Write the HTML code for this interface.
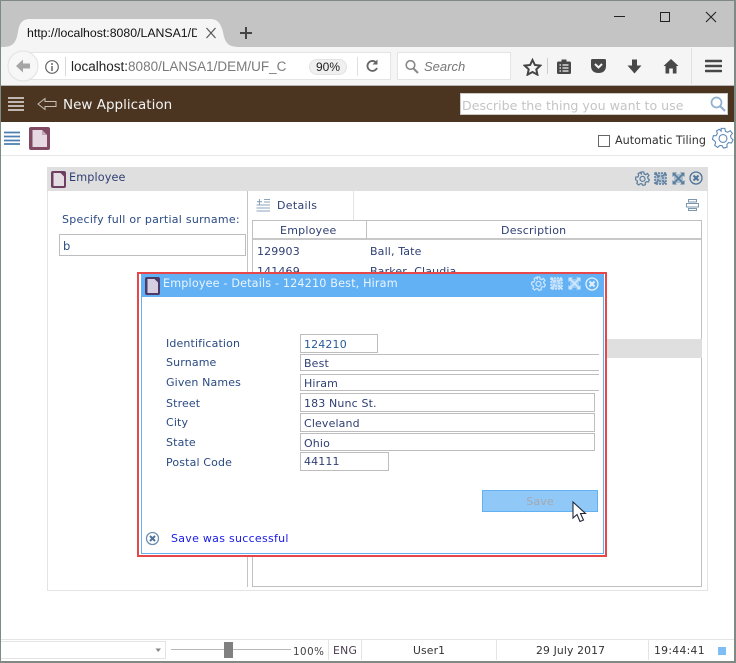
<!DOCTYPE html>
<html><head><meta charset="utf-8"><style>
html,body{margin:0;padding:0;background:#fff}
#r{position:relative;width:736px;height:663px;overflow:hidden;background:#fff;font-family:"DejaVu Sans",sans-serif;font-size:11px;color:#2f3f73}
#r div,#r svg{position:absolute}
.t{white-space:nowrap;line-height:14px;letter-spacing:.14px}
.c{letter-spacing:0}
.l{color:#2a4a82}
.f{border:1px solid #bdbdbd;box-sizing:border-box;background:#fff;color:#2f3f73;padding-left:3px;white-space:nowrap;letter-spacing:.14px}
</style></head><body><div id="r">
<div style="left:0;top:0;width:736px;height:47px;background:#c4c4c4"></div>
<svg style="left:0;top:18px" width="240" height="30"><path d="M2 29C12 29 16 26 18 14C19 6 22 1 30 1H210C218 1 221 6 223 14C225 26 229 29 240 29Z" fill="#f5f5f5"/></svg>
<div class="t c" style="left:27px;top:26px;font-family:'Liberation Sans',sans-serif;font-size:12.3px;color:#111;width:170px;overflow:hidden">http://localhost:8080/LANSA1/D</div>
<svg style="left:205px;top:26px" width="12" height="14"><path d="M1.500 2L10.500 12M10.500 2L1.500 12" stroke="#555" stroke-width="1.200"/></svg>
<svg style="left:239px;top:26px" width="14" height="14"><path d="M7 1V13M1 7H13" stroke="#444" stroke-width="2"/></svg>
<svg style="left:614px;top:10px" width="112" height="16"><path d="M0 6.500H11" stroke="#222"/><rect x="46.500" y="2.500" width="9" height="9" fill="none" stroke="#222"/><path d="M92 2L102 12M102 2L92 12" stroke="#222" stroke-width="1.100"/></svg>
<div style="left:0;top:47px;width:736px;height:39px;background:#f5f5f5"></div>
<div style="left:8px;top:52px;width:383px;height:28px;background:#fff;border:1px solid #e4e4e4;box-sizing:border-box;border-radius:14px 0 0 14px"></div>
<svg style="left:7px;top:50px" width="32" height="32"><circle cx="16" cy="16" r="15" fill="#f7f7f7" stroke="#e2e2e2"/><path d="M9 16L16 9.500V13.500H23V18.500H16V22.500Z" fill="#a5a5a5"/></svg>
<svg style="left:44px;top:59px" width="16" height="16"><circle cx="8" cy="8" r="6.300" fill="none" stroke="#666" stroke-width="1.200"/><path d="M8 7V12M8 4V6" stroke="#666" stroke-width="1.500"/></svg>
<div style="left:65px;top:57px;width:1px;height:19px;background:#d8d8d8"></div>
<div class="t c" style="left:71px;top:60px;font-family:'Liberation Sans',sans-serif;font-size:13.500px;color:#7a7a7a;width:215px;overflow:hidden"><span style="color:#222">localhost:</span>8080/LANSA1/DEM/UF_C</div>
<div class="t c" style="left:309px;top:59px;width:38px;height:16px;border-radius:8px;background:#f0f0f0;border:1px solid #e2e2e2;box-sizing:border-box;text-align:center;font-family:'Liberation Sans',sans-serif;font-size:12px;color:#222">90%</div>
<div style="left:357px;top:57px;width:1px;height:19px;background:#e0e0e0"></div>
<svg style="left:364px;top:58px" width="16" height="16"><path d="M12.500 5A5 5 0 1 0 13 10" fill="none" stroke="#666" stroke-width="1.800"/><path d="M13.500 1.500V6.500H8.500Z" fill="#666"/></svg>
<div style="left:397px;top:52px;width:114px;height:28px;background:#fff;border:1px solid #e4e4e4;box-sizing:border-box"></div>
<svg style="left:404px;top:59px" width="16" height="16"><circle cx="6.500" cy="6" r="4.300" fill="none" stroke="#888" stroke-width="1.600"/><path d="M9.500 9.500L14 14" stroke="#888" stroke-width="2"/></svg>
<div class="t c" style="left:424px;top:60px;font-family:'Liberation Sans',sans-serif;font-size:13px;font-style:italic;color:#777">Search</div>
<svg style="left:523px;top:58px" width="19" height="18"><path d="M9.500 2L11.900 7L17.300 7.600L13.300 11.300L14.400 16.600L9.500 14L4.600 16.600L5.700 11.300L1.700 7.600L7.100 7Z" fill="none" stroke="#444" stroke-width="2"/></svg>
<div style="left:547px;top:58px;width:1px;height:16px;background:#ccc"></div>
<svg style="left:556px;top:58px" width="16" height="17"><path d="M1 5Q1 3.500 2.500 3.500H5.500V1.500H10.500V3.500H13.500Q15 3.500 15 5V14.500Q15 16 13.500 16H2.500Q1 16 1 14.500Z" fill="#484848"/><path d="M3.500 7H5M6.500 7H12.500M3.500 10H5M6.500 10H12.500M3.500 13H5M6.500 13H12.500" stroke="#f5f5f5" stroke-width="1.300"/></svg>
<svg style="left:590px;top:58px" width="17" height="16"><path d="M1 2.500Q1 1 2.500 1H14.500Q16 1 16 2.500V7.500Q16 15 8.500 15Q1 15 1 7.500Z" fill="#484848"/><path d="M5 6L8.500 9.500L12 6" fill="none" stroke="#f5f5f5" stroke-width="2"/></svg>
<svg style="left:627px;top:59px" width="15" height="15"><path d="M5 0.500H10V6.500H14.500L7.500 14.500L0.500 6.500H5Z" fill="#484848"/></svg>
<svg style="left:663px;top:58px" width="16" height="16"><path d="M8 1L15.500 8H13.500V15.500H9.800V10.500H6.200V15.500H2.500V8H0.500Z" fill="#484848"/></svg>
<div style="left:691px;top:48px;width:1px;height:36px;background:#e0e0e0"></div>
<svg style="left:705px;top:59px" width="17" height="14"><path d="M1 2H16M1 7H16M1 12H16" stroke="#484848" stroke-width="2.600" stroke-linecap="round"/></svg>
<div style="left:0;top:85px;width:736px;height:1px;background:#b5b5b5"></div>
<div style="left:0;top:86px;width:736px;height:36px;background:#4b3521"></div>
<svg style="left:8px;top:97px" width="17" height="14"><path d="M0 1H16M0 5H16M0 9H16M0 13H16" stroke="#e8e4df" stroke-width="1.400"/></svg>
<svg style="left:37px;top:97px" width="20" height="14"><path d="M1 7L8 1.500V4.500H19V9.500H8V12.500Z" fill="none" stroke="#c9c0b5"/></svg>
<div class="t c" style="left:63px;top:98px;font-size:13.500px;color:#f3f3f3">New Application</div>
<div style="left:460px;top:93px;width:268px;height:22px;background:#fff;border:1px solid #c8c8c8;box-sizing:border-box"></div>
<div class="t c" style="left:462px;top:98px;font-size:12.600px;color:#c4c4c4;line-height:15px">Describe the thing you want to use</div>
<svg style="left:709px;top:95px" width="18" height="18"><circle cx="7.500" cy="7.500" r="5" fill="none" stroke="#8fb0cf" stroke-width="1.700"/><path d="M11 11L16 16" stroke="#8fb0cf" stroke-width="2"/></svg>
<svg style="left:4px;top:131px" width="17" height="14"><path d="M0 1.500H16M0 5.500H16M0 9.500H16M0 13H16" stroke="#4c7fb0" stroke-width="1.700"/></svg>
<svg style="left:29px;top:127px" width="21" height="23"><rect width="21" height="23" rx="2" fill="#7f4a62"/><path d="M3.500 3H13L18 8V20H3.500Z" fill="#e6d9e2"/><path d="M13 3V8H18" fill="#bda8b6"/></svg>
<div style="left:598px;top:135px;width:12px;height:12px;border:1px solid #666;box-sizing:border-box"></div>
<div class="t c" style="left:615px;top:134px;font-size:11.200px;color:#333">Automatic Tiling</div>
<svg style="left:712px;top:127px" width="22" height="22" viewBox="0 0 24 24"><path d="M10 1.500H14L14.700 4.800L17 5.800L19.900 4L22.300 7L20.200 9.500L20.800 12L23 14L21.300 17.500L18 17L16.300 19L16.500 22L12.500 23L10.800 20.300H8.500L6 22.300L3 20L4 17L2.800 15L0.500 13.500L1.500 9.500L4.500 9.500L5.800 7.200L5 4.300L8 2.500L10 4.500Z" fill="none" stroke="#5d8ab8" stroke-width="1.200"/><circle cx="12" cy="12.500" r="4.300" fill="none" stroke="#5d8ab8" stroke-width="1.200"/></svg>
<div style="left:0;top:155px;width:736px;height:1px;background:#e8e8e8"></div>
<div style="left:47px;top:167px;width:661px;height:424px;border:1px solid #e4e4e4;box-sizing:border-box"></div>
<div style="left:47px;top:167px;width:661px;height:24px;background:#dfdfdf"></div>
<svg style="left:51px;top:171px" width="15" height="17"><rect width="15" height="17" rx="2" fill="#6d4060"/><path d="M2.500 2H9.500L13 5.500V15H2.500Z" fill="#e6dce4"/></svg>
<div class="t" style="left:69px;top:171px;color:#2f3f73;font-size:11.200px">Employee</div>
<svg style="left:635px;top:171px" width="15" height="15" viewBox="0 0 24 24"><path d="M10 1.500H14L14.700 4.800L17 5.800L19.900 4L22.300 7L20.200 9.500L20.800 12L23 14L21.300 17.500L18 17L16.300 19L16.500 22L12.500 23L10.800 20.300H8.500L6 22.300L3 20L4 17L2.800 15L0.500 13.500L1.500 9.500L4.500 9.500L5.800 7.200L5 4.300L8 2.500L10 4.500Z" fill="none" stroke="#5d7f9f" stroke-width="2"/><circle cx="12" cy="12.500" r="4" fill="none" stroke="#5d7f9f" stroke-width="2"/></svg>
<svg style="left:654px;top:172px" width="13" height="13"><path d="M1 1H12V12H1Z M4 4H9V9H4Z" fill="#b3c2d0" stroke="#5d7f9f" stroke-width="1.500" stroke-dasharray="2 1"/><path d="M1 1L4 4M12 1L9 4M1 12L4 9M12 12L9 9" stroke="#5d7f9f" stroke-width="1.500"/></svg>
<svg style="left:672px;top:172px" width="13" height="13"><path d="M0.500 0.500H5L0.500 5ZM12.500 0.500H8L12.500 5ZM0.500 12.500H5L0.500 8ZM12.500 12.500H8L12.500 8Z" fill="#5d7f9f"/><rect x="2" y="2" width="9" height="9" fill="#a9bccc"/><path d="M1 1L12 12M12 1L1 12" stroke="#5d7f9f" stroke-width="1.800"/></svg>
<svg style="left:689px;top:171px" width="14" height="14"><circle cx="7" cy="7" r="6" fill="none" stroke="#4e7398" stroke-width="1.300"/><path d="M4.500 4.500L9.500 9.500M9.500 4.500L4.500 9.500" stroke="#4e7398" stroke-width="2"/></svg>
<div style="left:247px;top:191px;width:1px;height:396px;background:#c4c4c4"></div>
<div class="t" style="left:62px;top:213px;font-size:11px;color:#2a4a82;letter-spacing:.26px">Specify full or partial surname:</div>
<div class="f" style="left:59px;top:234px;width:187px;height:22px;line-height:22px;font-size:11.500px;color:#2a4a82">b</div>
<svg style="left:256px;top:198px" width="15" height="14"><path d="M0.500 13H14M0.500 10H14M0.500 7H14M8 4H14M8 1.500H14M3.500 1V6.500M1 3.700H6" stroke="#8ba4bb" stroke-width="1.100"/></svg>
<div class="t" style="left:277px;top:198px;font-size:11px;color:#2f3f73;letter-spacing:.3px;line-height:15px">Details</div>
<div style="left:353px;top:191px;width:1px;height:29px;background:#e4e4e4"></div>
<svg style="left:686px;top:199px" width="13" height="12"><path d="M2.500 0.500H10.500V3H2.500ZM0.500 4.500H12.500V8H0.500ZM2.500 9.500H10.500V11.500H2.500Z" fill="#fff" stroke="#7d97ae"/></svg>
<div style="left:252px;top:220px;width:450px;height:367px;border:1px solid #c0c0c0;box-sizing:border-box"></div>
<div style="left:253px;top:238px;width:448px;height:2px;background:#c8c8c8"></div>
<div style="left:366px;top:221px;width:1px;height:18px;background:#c0c0c0"></div>
<div class="t" style="left:280px;top:224px;color:#2f3f73;font-size:11px;letter-spacing:.25px">Employee</div>
<div class="t" style="left:501px;top:224px;color:#2f3f73;font-size:11px;letter-spacing:.25px">Description</div>
<div class="t" style="left:257px;top:245px;color:#2f3f73;font-size:11px">129903</div>
<div class="t" style="left:370px;top:245px;color:#2f3f73;font-size:11px">Ball, Tate</div>
<div class="t" style="left:257px;top:265px;color:#2f3f73;font-size:11px">141469</div>
<div class="t" style="left:370px;top:265px;color:#2f3f73;font-size:11px">Barker, Claudia</div>
<div style="left:253px;top:339px;width:449px;height:19px;background:#dfdfdf"></div>
<div style="left:137px;top:272px;width:470px;height:285px;border:2px solid #e8474a;box-sizing:border-box;background:#fff"></div>
<div style="left:141px;top:274px;width:463px;height:280px;border:1px solid #62b1f5;border-top:0;box-sizing:border-box;background:#fff"></div>
<div style="left:141px;top:274px;width:463px;height:23px;background:#62b1f5"></div>
<svg style="left:145px;top:277px" width="15" height="18"><rect width="15" height="18" rx="2" fill="#4d3a68"/><path d="M2.500 2H9.500L13 5.500V16H2.500Z" fill="#d4d0e0"/></svg>
<div class="t" style="left:163px;top:277px;color:#eaf4fd;font-size:11.200px;letter-spacing:.16px">Employee - Details - 124210 Best, Hiram</div>
<svg style="left:531px;top:276px" width="15" height="15" viewBox="0 0 24 24"><path d="M10 1.500H14L14.700 4.800L17 5.800L19.900 4L22.300 7L20.200 9.500L20.800 12L23 14L21.300 17.500L18 17L16.300 19L16.500 22L12.500 23L10.800 20.300H8.500L6 22.300L3 20L4 17L2.800 15L0.500 13.500L1.500 9.500L4.500 9.500L5.800 7.200L5 4.300L8 2.500L10 4.500Z" fill="none" stroke="#cfe6fb" stroke-width="2"/><circle cx="12" cy="12.500" r="4" fill="none" stroke="#cfe6fb" stroke-width="2"/></svg>
<svg style="left:550px;top:277px" width="13" height="13"><path d="M1 1H12V12H1Z M4 4H9V9H4Z" fill="#9ccdf8" stroke="#cfe6fb" stroke-width="1.500" stroke-dasharray="2 1"/><path d="M1 1L4 4M12 1L9 4M1 12L4 9M12 12L9 9" stroke="#cfe6fb" stroke-width="1.500"/></svg>
<svg style="left:568px;top:277px" width="13" height="13"><path d="M0.500 0.500H5L0.500 5ZM12.500 0.500H8L12.500 5ZM0.500 12.500H5L0.500 8ZM12.500 12.500H8L12.500 8Z" fill="#cfe6fb"/><rect x="2" y="2" width="9" height="9" fill="#94c9f8"/><path d="M1 1L12 12M12 1L1 12" stroke="#cfe6fb" stroke-width="1.800"/></svg>
<svg style="left:585px;top:277px" width="14" height="14"><circle cx="7" cy="7" r="6" fill="none" stroke="#e4f1fd" stroke-width="1.300"/><path d="M4.500 4.500L9.500 9.500M9.500 4.500L4.500 9.500" stroke="#e4f1fd" stroke-width="2"/></svg>
<div class="t l" style="left:166px;top:337px">Identification</div>
<div class="t l" style="left:166px;top:356px">Surname</div>
<div class="t l" style="left:166px;top:376px">Given Names</div>
<div class="t l" style="left:166px;top:397px">Street</div>
<div class="t l" style="left:166px;top:416px">City</div>
<div class="t l" style="left:166px;top:436px">State</div>
<div class="t l" style="left:166px;top:456px">Postal Code</div>
<div class="f" style="left:300px;top:334px;width:78px;height:19px;line-height:19px;color:#2a5a9a">124210</div>
<div class="f" style="left:300px;top:354px;width:299px;height:17px;line-height:17px;border-right:0">Best</div>
<div class="f" style="left:300px;top:374px;width:299px;height:17px;line-height:17px;border-right:0">Hiram</div>
<div class="f" style="left:300px;top:393px;width:295px;height:19px;line-height:20px">183 Nunc St.</div>
<div class="f" style="left:300px;top:413px;width:295px;height:19px;line-height:20px">Cleveland</div>
<div class="f" style="left:300px;top:433px;width:295px;height:18px;line-height:20px">Ohio</div>
<div class="f" style="left:300px;top:452px;width:89px;height:19px;line-height:18px">44111</div>
<div class="t" style="left:482px;top:490px;width:116px;height:22px;background:#90c8f8;border:1px solid #62b1f5;box-sizing:border-box;text-align:center;line-height:21px;color:#a6a8ad;font-size:11px">Save</div>
<svg style="left:571px;top:500px" width="16" height="23"><path d="M2 2V18L6 14.500L9 21.500L12.500 20L9.500 13.500H14.500Z" fill="#fff" stroke="#23283a" stroke-width="1.100"/></svg>
<svg style="left:145px;top:531px" width="15" height="15"><circle cx="7.500" cy="7.500" r="6" fill="none" stroke="#6d8fb0" stroke-width="1.300"/><path d="M5 5L10 10M10 5L5 10" stroke="#4e7398" stroke-width="2"/></svg>
<div class="t" style="left:171px;top:532px;color:#1a1ae6;font-size:11px;letter-spacing:.28px">Save was successful</div>
<div style="left:0;top:639px;width:736px;height:1px;background:#e4e4e4"></div>
<div style="left:0;top:641px;width:166px;height:18px;border:1px solid #e4e4e4;border-left:0;box-sizing:border-box"></div>
<svg style="left:155px;top:648px" width="7" height="5"><path d="M0.500 0.500H6L3.200 4Z" fill="#888"/></svg>
<div style="left:171px;top:649px;width:120px;height:1px;background:#b8b8b8"></div>
<div style="left:224px;top:642px;width:9px;height:16px;background:#808080"></div>
<div class="t" style="left:293px;top:645px;color:#444;font-size:10.300px;letter-spacing:.5px">100%</div>
<div style="left:328px;top:640px;width:1px;height:20px;background:#e4e4e4"></div>
<div class="t" style="left:333px;top:644px;color:#4a3a50;font-size:10.800px;letter-spacing:.3px">ENG</div>
<div style="left:361px;top:640px;width:1px;height:20px;background:#e4e4e4"></div>
<div class="t" style="left:413px;top:644px;color:#333;font-size:10.800px">User1</div>
<div style="left:496px;top:640px;width:1px;height:20px;background:#e4e4e4"></div>
<div class="t" style="left:536px;top:644px;color:#333;font-size:10.800px">29 July 2017</div>
<div style="left:648px;top:640px;width:1px;height:20px;background:#e4e4e4"></div>
<div class="t" style="left:654px;top:644px;color:#333;font-size:10.800px;letter-spacing:.3px">19:44:41</div>
<div style="left:718px;top:647px;width:8px;height:8px;background:#7fbdf6"></div>
<div style="left:0;top:0;width:736px;height:663px;border:1px solid #7f8a85;border-width:1px 2px 2px 1px;box-sizing:border-box"></div>
</div></body></html>
